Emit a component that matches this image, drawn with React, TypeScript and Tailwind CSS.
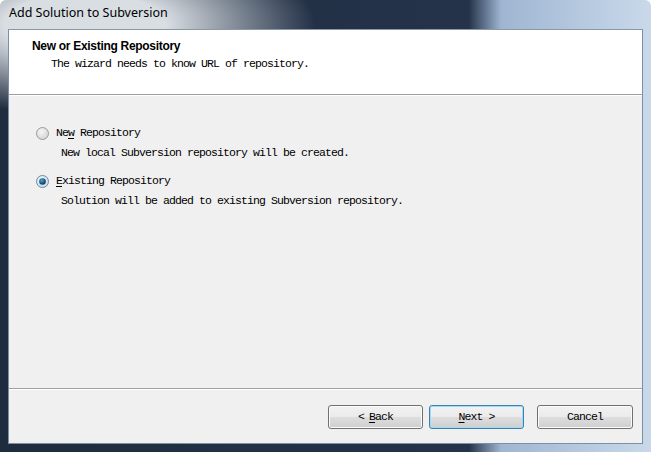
import React from 'react';

const mono = "font-['Liberation_Mono',monospace] text-[11.5px] tracking-[-0.9px] leading-[14px] text-black";

const Radio: React.FC<{ checked?: boolean }> = ({ checked }) => (
    <svg width="13" height="13" viewBox="0 0 13 13" className="shrink-0">
        <defs>
            <radialGradient id={checked ? 'rOn' : 'rOff'} cx="0.4" cy="0.35" r="0.7">
                <stop offset="0%" stopColor={checked ? '#f4f8fb' : '#f6f6f6'} />
                <stop offset="100%" stopColor={checked ? '#c9d8e4' : '#d2d2d2'} />
            </radialGradient>
            <radialGradient id="dot" cx="0.4" cy="0.35" r="0.7">
                <stop offset="0%" stopColor="#4fa7d8" />
                <stop offset="60%" stopColor="#155a86" />
                <stop offset="100%" stopColor="#0c324f" />
            </radialGradient>
        </defs>
        <circle cx="6.5" cy="6.5" r="6" fill={`url(#${checked ? 'rOn' : 'rOff'})`} stroke={checked ? '#6c8aa3' : '#9a9a9a'} />
        {checked && <circle cx="6.5" cy="6.5" r="3.3" fill="url(#dot)" />}
    </svg>
);

const Button: React.FC<{ children: React.ReactNode; primary?: boolean; w?: string }> = ({ children, primary, w = 'w-[95px]' }) => (
    <button
        className={`${w} h-[24px] rounded-[3px] border ${primary ? 'border-[#3c7fb1] shadow-[inset_0_0_0_1px_#9fdcf6]' : 'border-[#707070] shadow-[inset_0_0_0_1px_#fbfbfb]'} bg-[linear-gradient(to_bottom,#f2f2f2_0%,#ebebeb_48%,#dddddd_52%,#cfcfcf_100%)] flex items-center justify-center ${mono}`}
    >
        {children}
    </button>
);

export default function App() {
    return (
        <div className="w-[651px] h-[452px] flex flex-col px-[8px] pb-[8px] rounded-t-[6px] overflow-hidden bg-[radial-gradient(ellipse_230px_90px_at_85px_25px,#d9dee3_35%,rgba(200,208,216,0)_100%),linear-gradient(to_right,#1f2c3f_0%,#24334a_72%,#9fb6d2_77%,#c9d9ea_100%)]">
            {/* Title bar */}
            <div className="h-[29px] flex items-center shrink-0">
                <span className="font-['Noto_Sans',sans-serif] text-[12.5px] text-black pl-[1px] pb-[2px]">Add Solution to Subversion</span>
            </div>

            {/* Client area */}
            <div className="flex-1 flex flex-col bg-[#f0f0f0] border border-[#7d8da3] border-t-[#8a97a6]">
                {/* Header */}
                <div className="h-[65px] bg-white border-b border-[#a0a0a0] shadow-[0_1px_0_#ffffff] pl-[23px] pt-[9px] shrink-0">
                    <div className="font-['Liberation_Sans',sans-serif] font-bold text-[12px] tracking-[-0.3px] leading-[14px] text-black">
                        New or Existing Repository
                    </div>
                    <div className={`${mono} mt-[4px] ml-[19px]`}>The wizard needs to know URL of repository.</div>
                </div>

                {/* Body */}
                <div className="flex-1 pl-[27px] pt-[31px]">
                    <div className="flex items-center gap-[7px] h-[14px]">
                        <Radio />
                        <span className={mono}>
                            Ne<span className="underline underline-offset-2">w</span> Repository
                        </span>
                    </div>
                    <div className={`${mono} mt-[6px] ml-[25px]`}>New local Subversion repository will be created.</div>

                    <div className="flex items-center gap-[7px] h-[14px] mt-[14px]">
                        <Radio checked />
                        <span className={mono}>
                            <span className="underline underline-offset-2">E</span>xisting Repository
                        </span>
                    </div>
                    <div className={`${mono} mt-[6px] ml-[25px]`}>Solution will be added to existing Subversion repository.</div>
                </div>

                {/* Footer */}
                <div className="h-[55px] border-t border-[#a0a0a0] shadow-[inset_0_1px_0_#ffffff] flex items-start justify-end pt-[16px] pr-[9px] shrink-0">
                    <Button>
                        &lt;<span className="underline underline-offset-2 ml-[5px]">B</span>ack
                    </Button>
                    <div className="w-[6px]" />
                    <Button primary>
                        <span className="underline underline-offset-2">N</span>ext &gt;
                    </Button>
                    <div className="w-[13px]" />
                    <Button w="w-[96px]">Cancel</Button>
                </div>
            </div>
        </div>
    );
}
